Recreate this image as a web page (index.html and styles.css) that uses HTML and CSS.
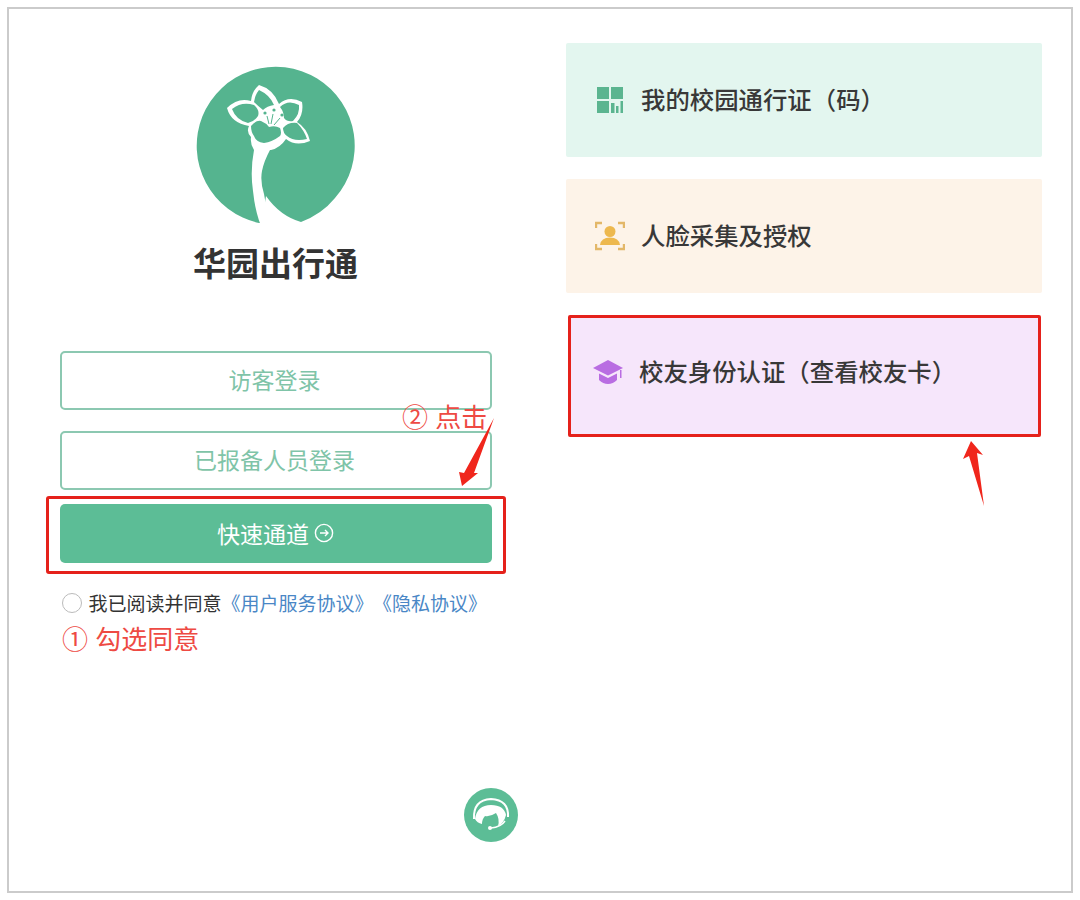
FILE: index.html
```html
<!DOCTYPE html>
<html lang="zh-CN">
<head>
    <meta charset="utf-8">
    <title>华园出行通</title>
    <link rel="stylesheet" href="styles.css">
</head>
<body>
    <div class="frame">
        <div class="login-col">
            <svg class="logo" viewBox="0 0 160 160">
                <path class="logo-green" d="M63 157A79 79 0 1 1 139 132Q126 148 105 156Q84 150 70 130L66 157Z"/>
                <path class="logo-white" d="M58 84Q54 105 57 125Q59 145 65 160L72 150L68 128Q64 115 66 105Q68 95 74 84Z"/>
                <path class="logo-white" d="M63 19Q77 23 83 38Q93 29 106 36Q108 48 101 56Q111 62 114 75Q100 81 90 73Q84 82 75 84L58 84Q54 78 55 71Q50 66 53 60Q35 57 31 42Q42 31 55 35Q56 25 63 19Z"/>
                <path class="logo-green" d="M36 43Q46 35 58 39Q64 44 62 50Q58 56 52 57Q40 54 36 43Z"/>
                <path class="logo-green" d="M63 24Q74 29 78 39Q71 40 67 44Q62 40 58 36Q59 29 63 24Z"/>
                <path class="logo-green" d="M84 41Q92 33 103 39Q104 48 97 55Q91 56 88 52Q88 46 84 41Z"/>
                <path class="logo-green" d="M87 62Q92 56 101 57Q108 64 111 73Q98 76 91 70Q87 67 87 62Z"/>
                <path class="logo-green" d="M55 60Q60 54 65 55Q70 57 73 61Q79 59 84 62Q86 67 84 70Q76 76 68 77Q60 76 58 70Q55 66 55 60Z"/>
                <circle class="logo-green" cx="69" cy="47" r="1.6"/>
                <circle class="logo-green" cx="78" cy="44" r="1.6"/>
                <circle class="logo-green" cx="86" cy="49" r="1.6"/>
                <path class="logo-stamen" d="M73 58L71 50M75 58L77 48M78 59L84 52"/>
            </svg>
            <div class="app-name">华园出行通</div>

            <div class="login-btn">访客登录</div>
            <div class="login-btn second">已报备人员登录</div>
            <div class="highlight-box">
                <div class="fast-btn">
                    快速通道
                    <svg class="fast-arrow" viewBox="0 0 20 20">
                        <circle cx="10" cy="10" r="8.6"/>
                        <path d="M6 10H14M11 7L14 10L11 13"/>
                    </svg>
                </div>
            </div>

            <div class="agree-row">
                <span class="radio"></span>
                <span class="agree-text">我已阅读并同意<a class="agree-link">《用户服务协议》</a><a class="agree-link privacy">《隐私协议》</a></span>
            </div>
        </div>

        <div class="card-col">
            <div class="card card-green">
                <svg class="card-icon" viewBox="0 0 30 30">
                    <rect x="2" y="2" width="12" height="12" fill="#5bb590"/>
                    <rect x="16" y="2" width="12" height="12" fill="#5bb590"/>
                    <rect x="2" y="16" width="12" height="12" fill="#5bb590"/>
                    <rect x="16" y="18" width="3.5" height="10" fill="#5bb590"/>
                    <rect x="21" y="21" width="2.5" height="7" fill="#5bb590"/>
                    <rect x="25.5" y="16" width="2.5" height="12" fill="#5bb590"/>
                </svg>
                <span class="card-text">我的校园通行证（码）</span>
            </div>
            <div class="card card-orange">
                <svg class="card-icon" viewBox="0 0 30 30">
                    <path class="bracket" d="M1 7V2H7M23 2H29V7M29 23V28H23M7 28H1V23"/>
                    <circle cx="15" cy="10.5" r="5.5" fill="#edb84e"/>
                    <path d="M5 24Q6 16.5 15 16.5Q24 16.5 25 24Z" fill="#edb84e"/>
                </svg>
                <span class="card-text">人脸采集及授权</span>
            </div>
            <div class="card card-purple">
                <svg class="card-icon" viewBox="0 0 30 30">
                    <path d="M15 3L30 11L15 18.5L0 11Z" fill="#b96de2"/>
                    <path d="M6 16.5L15 21L24 16.5V23Q20 27 15 27Q10 27 6 23Z" fill="#b96de2"/>
                    <rect x="27" y="13" width="1.5" height="8" fill="#b96de2"/>
                </svg>
                <span class="card-text">校友身份认证（查看校友卡）</span>
            </div>
        </div>
    </div>

    <!-- annotations on top of the screenshot -->
    <div class="note note-click">② 点击</div>
    <div class="note note-agree">① 勾选同意</div>
    <svg class="arrows" viewBox="0 0 1080 900">
        <path d="M494 418L474 473L478 473L462 486L459 472L464 473Z" fill="#f0261c"/>
        <path d="M971 441L983 455L977 453L984 506L969 456L963 459Z" fill="#f0261c"/>
    </svg>

    <div class="help-btn">
        <svg class="help-icon" viewBox="0 0 54 54">
            <path class="help-ring" d="M10 31Q9 12 27 11Q45 12 44 29"/>
            <path d="M11 31Q13 17 27 17Q40 17 42 27Q40 35 34 38Q36 31 32 25Q26 29 21 28Q18 31 18 36Q13 35 11 31Z" fill="#fff"/>
            <path class="help-mic" d="M41 33Q37 39 27 40"/>
            <circle cx="26" cy="40" r="2" fill="#fff"/>
        </svg>
    </div>
</body>
</html>
```

FILE: styles.css
```css
* {
    box-sizing: border-box;
}

body {
    margin: 0;
    padding: 7px;
    position: relative;
    height: 900px;
    overflow: hidden;
    background: #fff;
    font-family: "Liberation Sans", "Noto Sans CJK SC", sans-serif;
    color: #333;
}

.frame {
    width: 1066px;
    height: 886px;
    border: 2px solid #cbcbcb;
    display: flex;
}

/* left column */
.login-col {
    width: 533px;
    padding-top: 57px;
    display: flex;
    flex-direction: column;
    align-items: center;
}

.logo {
    width: 160px;
    height: 160px;
    display: block;
}

.logo-green {
    fill: #55b48f;
}

.logo-white {
    fill: #fff;
}

.logo-stamen {
    fill: none;
    stroke: #55b48f;
    stroke-width: 1;
}

.app-name {
    margin-top: 19px;
    font-size: 33px;
    line-height: 40px;
    font-weight: 700;
    color: #333;
}

.login-btn {
    width: 432px;
    height: 59px;
    margin-top: 66px;
    padding: 0 2px 3px 0;
    border: 2px solid #8cc8b1;
    border-radius: 5px;
    display: flex;
    align-items: center;
    justify-content: center;
    font-size: 23px;
    color: #7fc4a8;
}

.login-btn.second {
    margin-top: 21px;
}

.highlight-box {
    width: 460px;
    height: 78px;
    margin-top: 6px;
    padding: 5px 11px 8px;
    border: 3px solid #e5211b;
    border-radius: 3px;
}

.fast-btn {
    height: 100%;
    padding-bottom: 2px;
    border-radius: 5px;
    background: #5cbd96;
    color: #fff;
    font-size: 23px;
    display: flex;
    align-items: center;
    justify-content: center;
    gap: 5px;
}

.fast-arrow {
    width: 20px;
    height: 20px;
    fill: none;
    stroke: #fff;
    stroke-width: 1.4;
}

.agree-row {
    width: 432px;
    margin-top: 16px;
    padding-left: 2px;
    display: flex;
    align-items: center;
    gap: 7px;
    height: 24px;
}

.radio {
    width: 20px;
    height: 20px;
    margin-top: 2px;
    border: 1.5px solid #bbb;
    border-radius: 50%;
    flex-shrink: 0;
}

.agree-text {
    font-size: 19px;
    white-space: nowrap;
    color: #333;
}

.agree-link {
    color: #4a87c6;
}

.agree-link.privacy {
    margin-left: 9px;
}

/* right column */
.card-col {
    width: 476px;
    margin-left: 24px;
    padding-top: 34px;
    display: flex;
    flex-direction: column;
    gap: 22px;
}

.card {
    height: 114px;
    padding-left: 29px;
    display: flex;
    align-items: center;
    gap: 16px;
    border-radius: 2px;
}

.card-green {
    background: #e3f6ef;
}

.card-orange {
    background: #fdf3e8;
}

.card-purple {
    height: 122px;
    margin: 0 1px 0 2px;
    padding-left: 22px;
    padding-bottom: 8px;
    border: 3px solid #e5211b;
    background: #f6e6fb;
}

.card-icon {
    width: 30px;
    height: 30px;
    flex-shrink: 0;
}

.bracket {
    fill: none;
    stroke: #e3b768;
    stroke-width: 2.4;
}

.card-text {
    margin-bottom: 4px;
    font-size: 24.4px;
    font-weight: 500;
    color: #383838;
    white-space: nowrap;
}

/* red notes and arrows */
.note {
    position: absolute;
    font-size: 26px;
    line-height: 30px;
    color: #ee4a43;
    white-space: nowrap;
}

.note-click {
    left: 402px;
    top: 403px;
}

.note-agree {
    left: 62px;
    top: 625px;
}

.arrows {
    position: absolute;
    left: 0;
    top: 0;
    width: 1080px;
    height: 900px;
    pointer-events: none;
}

.help-btn {
    position: absolute;
    left: 464px;
    top: 788px;
    width: 54px;
    height: 54px;
    border-radius: 50%;
    background: #5cbd96;
}

.help-icon {
    width: 54px;
    height: 54px;
    display: block;
}

.help-ring {
    fill: none;
    stroke: #fff;
    stroke-width: 2;
}

.help-mic {
    fill: none;
    stroke: #fff;
    stroke-width: 1.5;
}
```
